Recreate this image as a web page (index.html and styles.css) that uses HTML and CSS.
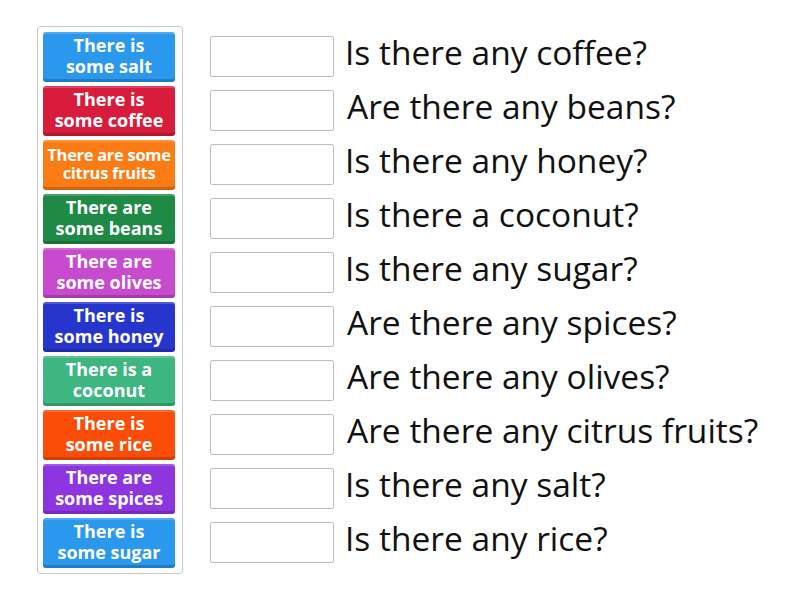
FILE: index.html
```html
<!DOCTYPE html>
<html>
<head>
<meta charset="utf-8">
<link rel="stylesheet" href="styles.css">
</head>
<body>
<main class="game">
  <div class="tray">
    <div class="tile c-blue">There is<br>some salt</div>
    <div class="tile c-red">There is<br>some coffee</div>
    <div class="tile c-orange small">There are some<br>citrus fruits</div>
    <div class="tile c-green">There are<br>some beans</div>
    <div class="tile c-pink">There are<br>some olives</div>
    <div class="tile c-navy">There is<br>some honey</div>
    <div class="tile c-teal">There is a<br>coconut</div>
    <div class="tile c-flame">There is<br>some rice</div>
    <div class="tile c-purple">There are<br>some spices</div>
    <div class="tile c-blue">There is<br>some sugar</div>
  </div>
  <div class="questions">
    <div class="row"><div class="slot"></div><span class="q">Is there any coffee?</span></div>
    <div class="row"><div class="slot"></div><span class="q are">Are there any beans?</span></div>
    <div class="row"><div class="slot"></div><span class="q">Is there any honey?</span></div>
    <div class="row"><div class="slot"></div><span class="q">Is there a coconut?</span></div>
    <div class="row"><div class="slot"></div><span class="q">Is there any sugar?</span></div>
    <div class="row"><div class="slot"></div><span class="q are">Are there any spices?</span></div>
    <div class="row"><div class="slot"></div><span class="q are">Are there any olives?</span></div>
    <div class="row"><div class="slot"></div><span class="q are">Are there any citrus fruits?</span></div>
    <div class="row"><div class="slot"></div><span class="q">Is there any salt?</span></div>
    <div class="row"><div class="slot"></div><span class="q">Is there any rice?</span></div>
  </div>
</main>
</body>
</html>
```

FILE: styles.css
```css
html, body {
  margin: 0;
  padding: 0;
  background: #fff;
}

.game {
  display: flex;
  align-items: flex-start;
  padding: 26px 0 0 37px;
  font-family: "Open Sans", "DejaVu Sans", sans-serif;
}

.tray {
  display: flex;
  flex-direction: column;
  gap: 4px;
  width: 132px;
  padding: 5px 7px 5px 5px;
  border: 1px solid #c8c8c8;
  border-radius: 4px;
}

.tile {
  height: 50px;
  box-sizing: border-box;
  display: flex;
  align-items: center;
  justify-content: center;
  text-align: center;
  color: #fff;
  font-weight: 700;
  font-size: 18px;
  line-height: 21px;
  border-radius: 3px;
  padding-bottom: 3px;
  white-space: nowrap;
  box-shadow: inset 0 -3px 0 rgba(0, 0, 0, 0.18), inset 0 2px 0 rgba(255, 255, 255, 0.18);
}

.tile.small {
  font-size: 16.5px;
  line-height: 18px;
  letter-spacing: -0.3px;
}

.c-blue   { background: #2a98ec; }
.c-red    { background: #d81d3c; }
.c-orange { background: #fb7b14; }
.c-green  { background: #1f8a45; }
.c-pink   { background: #c84bcf; }
.c-navy   { background: #2635cc; }
.c-teal   { background: #3db682; }
.c-flame  { background: #fb4d08; }
.c-purple { background: #8d36e0; }

.questions {
  display: flex;
  flex-direction: column;
  margin-left: 27px;
  margin-top: 10px;
}

.row {
  height: 54px;
  display: flex;
  align-items: flex-start;
}

.slot {
  width: 124px;
  height: 41px;
  box-sizing: border-box;
  border: 1px solid #bdbdbd;
  border-radius: 2px;
  background: #fff;
}

.q {
  margin-left: 11px;
  font-size: 33.5px;
  line-height: 41px;
  color: #111;
  white-space: nowrap;
  margin-top: -4px;
}

.q.are {
  margin-left: 13px;
}
```
